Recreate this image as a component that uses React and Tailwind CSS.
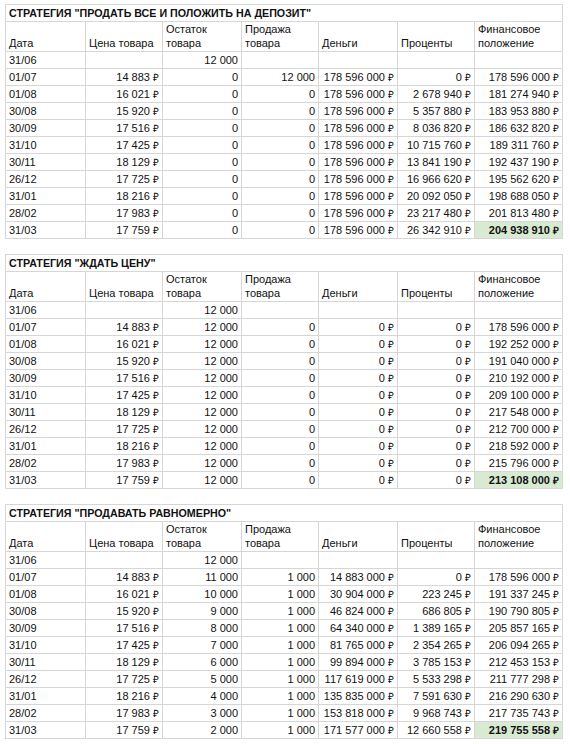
const PRICES = ["14 883", "16 021", "15 920", "17 516", "17 425", "18 129", "17 725", "18 216", "17 983", "17 759"];
const DATES = ["01/07", "01/08", "30/08", "30/09", "31/10", "30/11", "26/12", "31/01", "28/02", "31/03"];

const TABLES = [
  {
    title: 'СТРАТЕГИЯ "ПРОДАТЬ ВСЕ И ПОЛОЖИТЬ НА ДЕПОЗИТ"',
    stock: ["0", "0", "0", "0", "0", "0", "0", "0", "0", "0"],
    sale: ["12 000", "0", "0", "0", "0", "0", "0", "0", "0", "0"],
    money: Array(10).fill("178 596 000"),
    pct: ["0", "2 678 940", "5 357 880", "8 036 820", "10 715 760", "13 841 190", "16 966 620", "20 092 050", "23 217 480", "26 342 910"],
    fin: ["178 596 000", "181 274 940", "183 953 880", "186 632 820", "189 311 760", "192 437 190", "195 562 620", "198 688 050", "201 813 480", "204 938 910"],
  },
  {
    title: 'СТРАТЕГИЯ "ЖДАТЬ ЦЕНУ"',
    stock: Array(10).fill("12 000"),
    sale: Array(10).fill("0"),
    money: Array(10).fill("0"),
    pct: Array(10).fill("0"),
    fin: ["178 596 000", "192 252 000", "191 040 000", "210 192 000", "209 100 000", "217 548 000", "212 700 000", "218 592 000", "215 796 000", "213 108 000"],
  },
  {
    title: 'СТРАТЕГИЯ "ПРОДАВАТЬ РАВНОМЕРНО"',
    stock: ["11 000", "10 000", "9 000", "8 000", "7 000", "6 000", "5 000", "4 000", "3 000", "2 000"],
    sale: Array(10).fill("1 000"),
    money: ["14 883 000", "30 904 000", "46 824 000", "64 340 000", "81 765 000", "99 894 000", "117 619 000", "135 835 000", "153 818 000", "171 577 000"],
    pct: ["0", "223 245", "686 805", "1 389 165", "2 354 265", "3 785 153", "5 533 298", "7 591 630", "9 968 743", "12 660 558"],
    fin: ["178 596 000", "191 337 245", "190 790 805", "205 857 165", "206 094 265", "212 453 153", "211 777 298", "216 290 630", "217 735 743", "219 755 558"],
  },
];

// amount + small ruble sign, as the sheet renders it
function Rub({ v }) {
  return (
    <>
      {v} <span className="text-[10px]">₽</span>
    </>
  );
}

function Cell({ children, right, head, hl }) {
  const base = "border border-[#d6d6d6] px-[3px] overflow-hidden align-bottom";
  const kind = head ? "leading-[14px] pb-px whitespace-normal" : "h-[17px] leading-[15px] whitespace-nowrap";
  return (
    <td className={`${base} ${kind} ${right ? "text-right" : "text-left"} ${hl ? "bg-[#d9ead3] font-bold" : ""}`}>
      {children}
    </td>
  );
}

function Sheet({ t }) {
  return (
    <table className="w-[557px] table-fixed border-collapse text-[11px] text-[#111]">
      <colgroup>
        <col className="w-[80px]" />
        <col className="w-[77px]" />
        <col className="w-[79px]" />
        <col className="w-[77px]" />
        <col className="w-[79px]" />
        <col className="w-[77px]" />
        <col className="w-[88px]" />
      </colgroup>
      <tbody>
        <tr>
          <td colSpan={7} className="border border-[#d6d6d6] px-[3px] h-[17px] leading-[15px] align-bottom font-bold text-[10.7px] whitespace-nowrap">
            {t.title}
          </td>
        </tr>
        <tr className="h-[29px]">
          <Cell head>Дата</Cell>
          <Cell head>Цена товара</Cell>
          <Cell head>Остаток товара</Cell>
          <Cell head>Продажа товара</Cell>
          <Cell head>Деньги</Cell>
          <Cell head>Проценты</Cell>
          <Cell head>Финансовое положение</Cell>
        </tr>
        <tr>
          <Cell>31/06</Cell>
          <Cell right />
          <Cell right>12 000</Cell>
          <Cell right />
          <Cell right />
          <Cell right />
          <Cell right />
        </tr>
        {DATES.map((d, i) => (
          <tr key={d}>
            <Cell>{d}</Cell>
            <Cell right><Rub v={PRICES[i]} /></Cell>
            <Cell right>{t.stock[i]}</Cell>
            <Cell right>{t.sale[i]}</Cell>
            <Cell right><Rub v={t.money[i]} /></Cell>
            <Cell right><Rub v={t.pct[i]} /></Cell>
            <Cell right hl={i === 9}><Rub v={t.fin[i]} /></Cell>
          </tr>
        ))}
      </tbody>
    </table>
  );
}

export default function App() {
  return (
    <div className="w-[570px] min-h-[744px] bg-white pt-[4px] pl-[5px] font-['Liberation_Sans']">
      <div className="flex flex-col gap-[15px]">
        {TABLES.map((t) => (
          <Sheet key={t.title} t={t} />
        ))}
      </div>
    </div>
  );
}
